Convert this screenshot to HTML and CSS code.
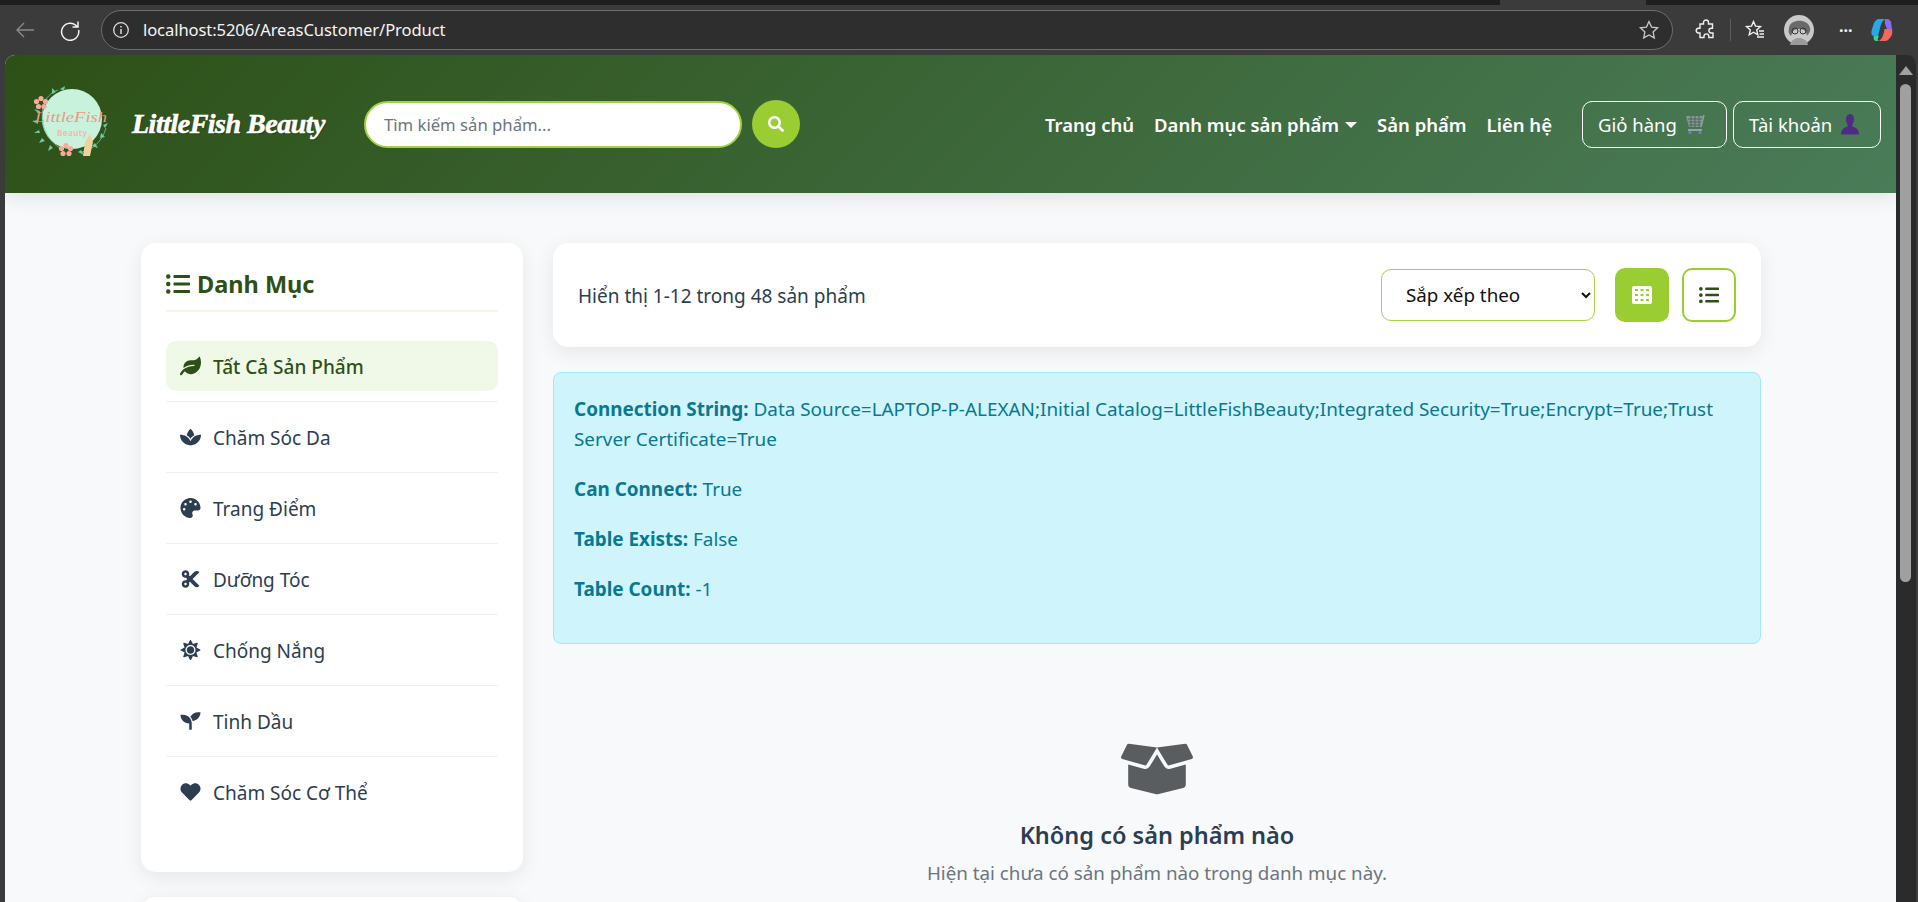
FILE: index.html
```html
<!DOCTYPE html>
<html lang="vi">
  <head>
    <meta charset="UTF-8" />
    <title>LittleFish Beauty</title>
    <link rel="stylesheet" href="styles.css">
  </head>
  <body>
    <svg class="sprite" xmlns="http://www.w3.org/2000/svg">
      <symbol id="i-search" viewBox="0 0 512 512"><path d="M505 442.7L405.3 343c-4.5-4.5-10.6-7-17-7H372c27.6-35.3 44-79.7 44-128C416 93.1 322.9 0 208 0S0 93.1 0 208s93.1 208 208 208c48.3 0 92.7-16.4 128-44v16.3c0 6.4 2.5 12.5 7 17l99.7 99.7c9.4 9.4 24.6 9.4 33.9 0l28.3-28.3c9.4-9.4 9.4-24.6.1-34zM208 336c-70.7 0-128-57.2-128-128 0-70.7 57.2-128 128-128 70.7 0 128 57.2 128 128 0 70.7-57.2 128-128 128z"/></symbol>
      <symbol id="i-list" viewBox="0 0 512 512"><path d="M48 48a48 48 0 1 0 48 48 48 48 0 0 0-48-48zm0 160a48 48 0 1 0 48 48 48 48 0 0 0-48-48zm0 160a48 48 0 1 0 48 48 48 48 0 0 0-48-48zm448 16H176a16 16 0 0 0-16 16v32a16 16 0 0 0 16 16h320a16 16 0 0 0 16-16v-32a16 16 0 0 0-16-16zm0-320H176a16 16 0 0 0-16 16v32a16 16 0 0 0 16 16h320a16 16 0 0 0 16-16V80a16 16 0 0 0-16-16zm0 160H176a16 16 0 0 0-16 16v32a16 16 0 0 0 16 16h320a16 16 0 0 0 16-16v-32a16 16 0 0 0-16-16z"/></symbol>
      <symbol id="i-leaf" viewBox="0 0 576 512"><path d="M546.2 9.7c-5.6-12.5-21.6-13-28.3-1.2C486.9 62.4 431.4 96 368 96h-80C182 96 96 182 96 288c0 7 .8 13.7 1.5 20.5C161.3 262.8 253.4 224 384 224c8.8 0 16 7.2 16 16s-7.2 16-16 16C132.6 256 26 410.1 2.4 468c-6.6 16.3 1.2 34.9 17.5 41.6 16.4 6.8 35-1.1 41.8-17.3 1.5-3.6 20.9-47.9 71.9-90.6 32.4 43.9 94 85.8 174.9 77.2C465.5 467.5 576 326.7 576 154.3c0-50.2-10.8-102.2-29.8-144.6z"/></symbol>
      <symbol id="i-spa" viewBox="0 0 576 512"><path d="M568.25 192c-29.04.13-135.01 6.16-213.84 83-33.12 29.63-53.36 63.3-66.41 94.86-13.05-31.56-33.29-65.23-66.41-94.86-78.83-76.84-184.8-82.87-213.84-83-4.41-.02-7.79 3.4-7.75 7.82.23 27.92 7.14 126.14 88.77 199.3C172.79 480.94 256 480 288 480s115.19.95 199.23-80.88c81.64-73.17 88.54-171.38 88.77-199.3.04-4.42-3.34-7.84-7.75-7.82zM287.98 302.6c12.82-18.85 27.6-35.78 44.09-50.52 19.09-18.61 39.58-33.3 60.26-45.18-16.44-70.5-51.72-133.05-96.73-172.22-4.11-3.58-11.02-3.58-15.14 0-44.99 39.14-80.27 101.57-96.74 171.92 20.37 11.7 40.5 26.14 59.22 44.39a282.768 282.768 0 0 1 45.04 51.61z"/></symbol>
      <symbol id="i-palette" viewBox="0 0 512 512"><path d="M204.3 5C104.9 24.4 24.8 104.3 5.2 203.4c-37 187 131.7 326.4 258.8 306.7 41.2-6.4 61.4-54.6 42.5-91.7-23.1-45.4 9.9-98.4 60.9-98.4h79.7c35.8 0 64.8-29.6 64.9-65.3C511.5 97.1 368.1-26.9 204.3 5zM96 320c-17.7 0-32-14.3-32-32s14.3-32 32-32 32 14.3 32 32-14.3 32-32 32zm32-128c-17.7 0-32-14.3-32-32s14.3-32 32-32 32 14.3 32 32-14.3 32-32 32zm128-64c-17.7 0-32-14.3-32-32s14.3-32 32-32 32 14.3 32 32-14.3 32-32 32zm128 64c-17.7 0-32-14.3-32-32s14.3-32 32-32 32 14.3 32 32-14.3 32-32 32z"/></symbol>
      <symbol id="i-cut" viewBox="0 0 448 512"><path d="M278.06 256L444.48 89.57c4.69-4.69 4.69-12.29 0-16.97-32.8-32.8-85.99-32.8-118.79 0L210.18 188.12l-24.86-24.86c4.31-10.92 6.68-22.81 6.68-35.26 0-53.02-42.98-96-96-96S0 74.98 0 128s42.98 96 96 96c4.54 0 8.99-.32 13.36-.93L142.29 256l-32.93 32.93c-4.37-.61-8.83-.93-13.36-.93-53.02 0-96 42.98-96 96s42.98 96 96 96 96-42.98 96-96c0-12.45-2.37-24.34-6.68-35.26l24.86-24.86L325.69 439.4c32.8 32.8 85.99 32.8 118.79 0 4.69-4.68 4.69-12.28 0-16.97L278.06 256zM96 160c-17.64 0-32-14.36-32-32s14.36-32 32-32 32 14.36 32 32-14.36 32-32 32zm0 256c-17.64 0-32-14.36-32-32s14.36-32 32-32 32 14.36 32 32-14.36 32-32 32z"/></symbol>
      <symbol id="i-sun" viewBox="0 0 512 512"><path d="M256 160c-52.9 0-96 43.1-96 96s43.1 96 96 96 96-43.1 96-96-43.1-96-96-96zm246.4 80.5l-94.7-47.3 33.5-100.4c4.5-13.6-8.4-26.5-21.9-21.9l-100.4 33.5-47.4-94.8c-6.4-12.8-24.6-12.8-31 0l-47.3 94.7L92.7 70.8c-13.6-4.5-26.5 8.4-21.9 21.9l33.5 100.4-94.7 47.4c-12.8 6.4-12.8 24.6 0 31l94.7 47.3-33.5 100.5c-4.5 13.6 8.4 26.5 21.9 21.9l100.4-33.5 47.3 94.7c6.4 12.8 24.6 12.8 31 0l47.3-94.7 100.4 33.5c13.6 4.5 26.5-8.4 21.9-21.9l-33.5-100.4 94.7-47.3c13-6.5 13-24.7.2-31.1zm-155.9 106c-49.9 49.9-131.1 49.9-181 0-49.9-49.9-49.9-131.1 0-181 49.9-49.9 131.1-49.9 181 0 49.9 49.9 49.9 131.1 0 181z"/></symbol>
      <symbol id="i-seedling" viewBox="0 0 512 512"><path d="M64 96H0c0 123.7 100.3 224 224 224v144c0 8.8 7.2 16 16 16h32c8.8 0 16-7.2 16-16V320C288 196.3 187.7 96 64 96zm384-64c-84.2 0-157.4 46.5-195.7 115.2 27.7 30.2 48.2 66.9 59 107.6C424 243.1 512 147.9 512 32h-64z"/></symbol>
      <symbol id="i-heart" viewBox="0 0 512 512"><path d="M462.3 62.6C407.5 15.9 326 24.3 275.7 76.2L256 96.5l-19.7-20.3C186.1 24.3 104.5 15.9 49.7 62.6c-62.8 53.6-66.1 149.8-9.9 207.9l193.5 199.8c12.5 12.9 32.8 12.9 45.3 0l193.5-199.8c56.3-58.1 53-154.3-9.8-207.9z"/></symbol>
      <symbol id="i-box" viewBox="0 0 640 512"><path d="M425.7 256c-16.9 0-32.8-9-41.4-23.4L320 126l-64.2 106.6c-8.7 14.5-24.6 23.5-41.5 23.5-4.5 0-9-.6-13.3-1.9L64 215v178c0 14.7 10 27.5 24.2 31l216.2 54.1c10.2 2.5 20.9 2.5 31 0L551.8 424c14.2-3.6 24.2-16.4 24.2-31V215l-137 39.1c-4.3 1.3-8.8 1.9-13.3 1.9zm212.6-112.2L586.8 41c-3.1-6.2-9.8-9.8-16.7-8.9L320 64l91.7 152.1c3.8 6.3 11.4 9.3 18.5 7.3l197.9-56.5c9.9-2.9 14.7-13.9 10.2-23.1zM53.2 41L1.7 143.8c-4.6 9.2.3 20.2 10.1 23l197.9 56.5c7.1 2 14.7-1 18.5-7.3L320 64 69.8 32.1c-6.9-.8-13.5 2.7-16.6 8.9z"/></symbol>
    </svg>

    <div class="tabstrip"><div class="tab-notch"></div></div>
    <div class="toolbar">
      <svg class="tool-back" viewBox="0 0 22 22" width="22" height="22"><path d="M20 11H3M10 4l-7 7 7 7" fill="none" stroke="#8a8a8a" stroke-width="1.4"/></svg>
      <svg class="tool-reload" viewBox="0 0 22 22" width="22" height="22"><path d="M18 7.5A8.6 8.6 0 1 0 19.6 11M19 2.5v5.5h-5.5" fill="none" stroke="#f2f2f2" stroke-width="1.5"/></svg>
      <div class="address">
        <svg viewBox="0 0 18 18" width="18" height="18"><circle cx="9" cy="9" r="7.3" fill="none" stroke="#dcdcdc" stroke-width="1.3"/><path d="M9 8v5M9 5v1.6" stroke="#dcdcdc" stroke-width="1.5"/></svg>
        <span class="url">localhost:5206/AreasCustomer/Product</span>
        <svg class="star" viewBox="0 0 22 22" width="22" height="22"><path d="M11 2.5l2.6 5.6 6 .7-4.5 4.1 1.2 6L11 16l-5.3 2.9 1.2-6-4.5-4.1 6-.7z" fill="none" stroke="#c8c8c8" stroke-width="1.3"/></svg>
      </div>
      <div class="tools">
        <svg viewBox="0 0 22 22" width="22" height="22"><path d="M8.5 3.5a2.5 2.5 0 0 1 5 0V5h4v4.200h-1.200a2.400 2.400 0 0 0 0 4.800H18v4.500h-4.200v-1.200a2.400 2.400 0 0 0-4.800 0v1.200H5V14H3.600a2.400 2.400 0 0 1 0-4.800H5V5h3.500z" fill="none" stroke="#f0f0f0" stroke-width="1.4"/></svg>
        <span class="tool-sep"></span>
        <svg viewBox="0 0 22 22" width="22" height="22"><path d="M9.500 2.500l2 4.600 5 .5-3.800 3.300 1.100 4.900-4.300-2.600-4.300 2.600 1.100-4.900L2.500 7.600l5-.5zM15 12h5M15.500 15h4.500M13 18h7" fill="none" stroke="#f0f0f0" stroke-width="1.4"/></svg>
        <svg class="avatar" viewBox="0 0 30 30" width="30" height="30"><circle cx="15" cy="15" r="15" fill="#c9c9c9"/><path d="M5 13C6 4 24 3 26 13c1 4-2 6-3 8-1-5-2-7-8-7s-6 2-8 7c-2-2-3-4-2-8z" fill="#6a6a6a"/><circle cx="11" cy="16" r="3" fill="none" stroke="#333" stroke-width="1"/><circle cx="19" cy="16" r="3" fill="none" stroke="#333" stroke-width="1"/><path d="M6 30c1-5 5-7 9-7s8 2 9 7z" fill="#9a9a9a"/></svg>
        <span class="dots">···</span>
        <svg class="copilot" viewBox="0 0 24 24" width="24" height="24"><path d="M9 1h6c-3 2-4 5-5 9l-2 8H4C1 18 1 14 2 11l2-6c1-2 3-4 5-4z" fill="#2aa7ea"/><path d="M15 1h2c2 0 3 1 4 3l1 7h-5l-2-5c-.500-2 0-4 0-5z" fill="#8b6cf0"/><path d="M22 11c1 4 0 7-3 10-1 1-2 2-4 2H9c3-2 4-5 5-9l.5-3z" fill="#f0685f"/><path d="M4 18h5l-1 2c-.500 1 0 3 1 3H6c-2 0-3-3-2-5z" fill="#3fd08a"/></svg>
      </div>
    </div>

    <div class="window">
      <div class="page">
        <header class="site-header">
          <a class="brand">
            <svg class="logo" viewBox="0 0 80 80" width="80" height="80">
              <circle cx="42" cy="35" r="30" fill="#c9f2dd"/>
              <path d="M13 24c-3 14 2 32 20 42M52 68c10-2 20-10 24-24M14 18C18 12 22 8 28 6" fill="none" stroke="#6fc9a6" stroke-width=".8"/>
              <path d="M9 30l-5-5 6 2zM8 40l-6-3 6-1zM10 49l-6 0 5-3zM15 57l-6 2 3-5zM23 64l-5 3 2-6zM48 68l6 3-3-5zM62 62l6 2-3-5zM70 54l5-1-4-4zM75 44l3-5-5 2zM22 10l0-6 4 4zM30 5l5-3-1 5z" fill="#6fc9a6"/>
              <g fill="#f8a99b">
                <circle cx="11" cy="14.500" r="2.600"/><circle cx="15.500" cy="17.500" r="2.600"/><circle cx="14" cy="22.500" r="2.600"/><circle cx="8.500" cy="22.500" r="2.600"/><circle cx="6.500" cy="17.500" r="2.600"/>
                <circle cx="36" cy="61.500" r="2.600"/><circle cx="40.500" cy="64.500" r="2.600"/><circle cx="39" cy="69.500" r="2.600"/><circle cx="33" cy="69.500" r="2.600"/><circle cx="31.500" cy="64.500" r="2.600"/>
              </g>
              <text class="logo-name" x="5" y="38" textLength="72" lengthAdjust="spacingAndGlyphs">LittleFish</text>
              <text class="logo-sub" x="27" y="52" textLength="30">Beauty</text>
              <path d="M53 72l2-14 5-8 3 8-3 14z" fill="#f3cf9c"/>
            </svg>
            <span class="brand-name">LittleFish Beauty</span>
          </a>
          <form class="search">
            <input class="search-input" type="text" placeholder="Tìm kiếm sản phẩm..." />
            <button class="search-btn" type="button"><svg class="ico"><use href="#i-search"/></svg></button>
          </form>
          <nav class="nav">
            <a>Trang chủ</a>
            <a class="has-caret">Danh mục sản phẩm</a>
            <a>Sản phẩm</a>
            <a>Liên hệ</a>
          </nav>
          <div class="actions">
            <a class="action action-cart">Giỏ hàng
              <svg viewBox="0 0 22 22" width="22" height="22"><path d="M2 3h17l-2 11H5z" fill="#8d949c"/><path d="M4 6h14M4.500 9h13M5 12h12M7 3v11M11 3v11M15 3v11" stroke="#3f6b48" stroke-width=".9"/><path d="M4 17h14" stroke="#8fa3b5" stroke-width="2"/><circle cx="6" cy="19.500" r="1.500" fill="#6f86b8"/><circle cx="16" cy="19.500" r="1.500" fill="#6f86b8"/><path d="M17 14l3-12" stroke="#8fa3b5" stroke-width="1.300"/></svg>
            </a>
            <a class="action action-user">Tài khoản
              <svg viewBox="0 0 22 22" width="22" height="22"><ellipse cx="11" cy="6.500" rx="4" ry="5.500" fill="#4e2c85"/><path d="M8.500 10h5v4h-5z" fill="#4e2c85"/><path d="M2 21.500c0-5 3-8 9-8s9 3 9 8z" fill="#4e2c85"/></svg>
            </a>
          </div>
        </header>

        <div class="content">
          <aside class="side">
            <div class="card cat-card">
              <h2 class="cat-title"><svg class="ico"><use href="#i-list"/></svg> Danh Mục</h2>
              <ul class="cat-list">
                <li><a class="active"><svg class="ico"><use href="#i-leaf"/></svg><span class="cat-name">Tất Cả Sản Phẩm</span></a></li>
                <li><a><svg class="ico"><use href="#i-spa"/></svg><span class="cat-name">Chăm Sóc Da</span></a></li>
                <li><a><svg class="ico"><use href="#i-palette"/></svg><span class="cat-name">Trang Điểm</span></a></li>
                <li><a><svg class="ico"><use href="#i-cut"/></svg><span class="cat-name">Dưỡng Tóc</span></a></li>
                <li><a><svg class="ico"><use href="#i-sun"/></svg><span class="cat-name">Chống Nắng</span></a></li>
                <li><a><svg class="ico"><use href="#i-seedling"/></svg><span class="cat-name">Tinh Dầu</span></a></li>
                <li><a><svg class="ico"><use href="#i-heart"/></svg><span class="cat-name">Chăm Sóc Cơ Thể</span></a></li>
              </ul>
            </div>
            <div class="card next-card"></div>
          </aside>

          <main class="main">
            <div class="card result-bar">
              <span class="result-count">Hiển thị 1-12 trong 48 sản phẩm</span>
              <select class="sort">
                <option>Sắp xếp theo</option>
              </select>
              <button class="view-btn view-on" type="button">
                <svg viewBox="0 0 20 18" width="20" height="18"><rect width="20" height="18" rx="2" fill="#fff"/><path d="M3 3h3v2H3zM8.500 3h3v2h-3zM14 3h3v2h-3zM3 8h3v2H3zM8.500 8h3v2h-3zM14 8h3v2h-3zM3 13h3v2H3zM8.500 13h3v2h-3zM14 13h3v2h-3z" fill="#9acd32"/></svg>
              </button>
              <button class="view-btn" type="button"><svg class="ico"><use href="#i-list"/></svg></button>
            </div>

            <div class="alert">
              <p><strong>Connection String:</strong> Data Source=LAPTOP-P-ALEXAN;Initial Catalog=LittleFishBeauty;Integrated Security=True;Encrypt=True;Trust<br>Server Certificate=True</p>
              <p><strong>Can Connect:</strong> True</p>
              <p><strong>Table Exists:</strong> False</p>
              <p><strong>Table Count:</strong> -1</p>
            </div>

            <div class="empty">
              <svg class="empty-ico"><use href="#i-box"/></svg>
              <h4 class="empty-title">Không có sản phẩm nào</h4>
              <p class="empty-text">Hiện tại chưa có sản phẩm nào trong danh mục này.</p>
            </div>
          </main>
        </div>
      </div>

      <div class="scrollbar">
        <span class="scroll-up"></span>
        <span class="scroll-thumb"></span>
      </div>
    </div>
  </body>
</html>
```

FILE: styles.css
```css
* {
  box-sizing: border-box;
}
html, body {
  margin: 0;
  height: 902px;
  overflow: hidden;
}
body {
  background: #3b3b3b;
  font-family: "Noto Sans", "Open Sans", sans-serif;
  color: #2c3e50;
  display: flex;
  flex-direction: column;
}
a {
  color: inherit;
  text-decoration: none;
}
.sprite {
  display: none;
}
.ico {
  display: block;
  fill: currentColor;
}

/* browser chrome */
.tabstrip {
  height: 5px;
  background: #1f1f1f;
  flex: none;
  position: relative;
}
.tab-notch {
  position: absolute;
  left: 1500px;
  top: 0;
  width: 146px;
  height: 5px;
  background: #3b3b3b;
}
.toolbar {
  height: 50px;
  flex: none;
  display: flex;
  align-items: center;
}
.tool-back {
  margin-left: 14px;
}
.tool-reload {
  margin-left: 23px;
}
.address {
  margin-left: 20px;
  width: 1572px;
  height: 40px;
  border: 1px solid #6e6e6e;
  border-radius: 20px;
  background: #2e2e2e;
  display: flex;
  align-items: center;
  padding: 0 12px 0 10px;
  color: #f4f4f4;
}
.url {
  margin-left: 13px;
  padding-bottom: 2px;
  font-size: 16.600px;
  flex: 1;
  letter-spacing: -0.1px;
}
.tools {
  display: flex;
  align-items: center;
  margin-left: 22px;
}
.tool-sep {
  width: 1px;
  height: 22px;
  background: #5c5c5c;
  margin: 0 13px;
}
.avatar {
  margin-left: 18px;
}
.dots {
  color: #eee;
  font-size: 16px;
  font-weight: 700;
  margin-left: 25px;
}
.copilot {
  margin-left: 17px;
}

/* page */
.window {
  flex: 1;
  display: flex;
  padding-left: 5px;
  min-height: 0;
}
.page {
  flex: 1;
  min-width: 0;
  background: #f8f9fa;
  border-top-left-radius: 10px;
  overflow: hidden;
}
.scrollbar {
  width: 22px;
  background: #2b2b2b;
  border-right: 2px solid #3b3b3b;
  border-top-right-radius: 10px;
  position: relative;
}
.scroll-up {
  position: absolute;
  left: 3px;
  top: 11px;
  border-left: 7px solid transparent;
  border-right: 7px solid transparent;
  border-bottom: 9px solid #a0a0a0;
}
.scroll-thumb {
  position: absolute;
  left: 4px;
  top: 29px;
  width: 11px;
  height: 498px;
  border-radius: 6px;
  background: #a0a0a0;
}

/* header */
.site-header {
  height: 138px;
  background: linear-gradient(135deg, #2d5016, #4a7c59);
  box-shadow: 0 4px 20px rgba(0, 0, 0, 0.1);
  display: flex;
  align-items: center;
  padding-left: 25px;
  position: relative;
}
.brand {
  display: flex;
  align-items: center;
}
.logo-name {
  font-family: "Liberation Serif", serif;
  font-style: italic;
  font-size: 15px;
  fill: #e89a85;
}
.logo-sub {
  font-family: "Noto Sans", sans-serif;
  font-size: 8px;
  font-weight: 600;
  fill: #f5b5a8;
}
.brand-name {
  margin-left: 22px;
  font-family: "Liberation Serif", serif;
  font-style: italic;
  font-weight: 700;
  font-size: 28px;
  letter-spacing: -0.5px;
  color: #fff;
  -webkit-text-stroke: 0.6px #fff;
  text-shadow: 1px 1px 1px rgba(0, 0, 0, 0.35);
  white-space: nowrap;
}
.search {
  display: flex;
  align-items: center;
  margin-left: 39px;
}
.search-input {
  width: 378px;
  height: 47px;
  border: 2px solid #a3d13f;
  border-radius: 25px;
  padding: 0 18px;
  font: 16.700px "Noto Sans", sans-serif;
  background: #fff;
}
.search-input::placeholder {
  color: #6c757d;
}
.search-btn {
  width: 48px;
  height: 48px;
  margin-left: 10px;
  border: 0;
  border-radius: 50%;
  background: #9acd32;
  color: #fff;
  display: flex;
  align-items: center;
  justify-content: center;
  padding: 0;
}
.search-btn .ico {
  width: 16px;
  height: 16px;
}
.nav {
  margin-left: auto;
  display: flex;
  gap: 20px;
  color: #fff;
  font-size: 18.500px;
  font-weight: 600;
  white-space: nowrap;
}
.has-caret::after {
  content: "";
  display: inline-block;
  margin-left: 6px;
  vertical-align: 4px;
  border-top: 6px solid #fff;
  border-left: 6px solid transparent;
  border-right: 6px solid transparent;
}
.actions {
  display: flex;
  gap: 6px;
  margin-left: 30px;
  margin-right: 15px;
}
.action {
  height: 47px;
  border: 1px solid #fff;
  border-radius: 10px;
  color: #fff;
  font-size: 18.500px;
  display: flex;
  align-items: center;
  gap: 7px;
  padding: 0 10px 0 15px;
  white-space: nowrap;
}
.action-cart {
  width: 145px;
}
.action-user {
  width: 148px;
}

/* layout */
.content {
  display: grid;
  grid-template-columns: 382px 1208px;
  gap: 30px;
  padding: 50px 0 0 136px;
}
.card {
  background: #fff;
  border-radius: 15px;
  box-shadow: 0 5px 20px rgba(0, 0, 0, 0.08);
}

/* categories */
.cat-card {
  padding: 25px;
  height: 629px;
}
.next-card {
  margin-top: 25px;
  height: 120px;
}
.cat-title {
  margin: 0 0 29px;
  height: 44px;
  border-bottom: 2px solid #f0f8e8;
  color: #2d5016;
  font-size: 23.500px;
  font-weight: 700;
  line-height: 32px;
  display: flex;
  align-items: center;
  gap: 7px;
  padding-bottom: 10px;
}
.cat-title .ico {
  width: 24px;
  height: 24px;
}
.cat-list {
  list-style: none;
  margin: 0;
  padding: 0;
}
.cat-list li {
  padding-bottom: 10px;
  margin-bottom: 10px;
  border-bottom: 1px solid #f0f0f0;
}
.cat-list li:last-child {
  border-bottom: 0;
}
.cat-list a {
  height: 50px;
  display: flex;
  align-items: center;
  gap: 12px;
  padding-left: 14px;
  border-radius: 10px;
  font-size: 19px;
}
.cat-name {
  padding-top: 2px;
}
.cat-list .ico {
  width: 21px;
  height: 20px;
}
.cat-list .active {
  background: #f0f8e8;
  color: #2d5016;
  font-weight: 500;
}

/* results */
.result-bar {
  height: 104px;
  display: flex;
  align-items: center;
  padding: 0 25px;
}
.result-count {
  font-size: 19px;
  padding-top: 2px;
  margin-right: auto;
}
.sort {
  width: 214px;
  height: 52px;
  padding-left: 20px;
  border: 1.500px solid #a5d247;
  border-radius: 10px;
  background: #fff;
  color: #111;
  font: 18.800px "Noto Sans", sans-serif;
  margin-right: 20px;
}
.view-btn {
  width: 54px;
  height: 54px;
  padding: 0;
  border: 2px solid #9acd32;
  border-radius: 10px;
  background: #fff;
  color: #2d5016;
  display: flex;
  align-items: center;
  justify-content: center;
}
.view-btn + .view-btn {
  margin-left: 13px;
}
.view-btn .ico {
  width: 20px;
  height: 20px;
}
.view-on {
  background: #9acd32;
}

.alert {
  margin-top: 25px;
  height: 272px;
  padding: 21px 20px 0;
  background: #cff4fc;
  border: 1px solid #9eeaf9;
  border-radius: 8px;
  color: #087990;
  font-size: 18.900px;
  line-height: 30px;
}
.alert p {
  margin: 0 0 20px;
  white-space: nowrap;
}
.alert strong {
  font-weight: 700;
}

/* empty state */
.empty {
  text-align: center;
  padding-top: 96px;
}
.empty-ico {
  display: block;
  margin: 0 auto;
  width: 72px;
  height: 58px;
  fill: #595d60;
}
.empty-title {
  margin: 20px 0 0;
  font-size: 23.500px;
  font-weight: 600;
  line-height: 34px;
}
.empty-text {
  margin: 7px 0 0;
  font-size: 18.800px;
  line-height: 28px;
  color: #6c757d;
}
```
